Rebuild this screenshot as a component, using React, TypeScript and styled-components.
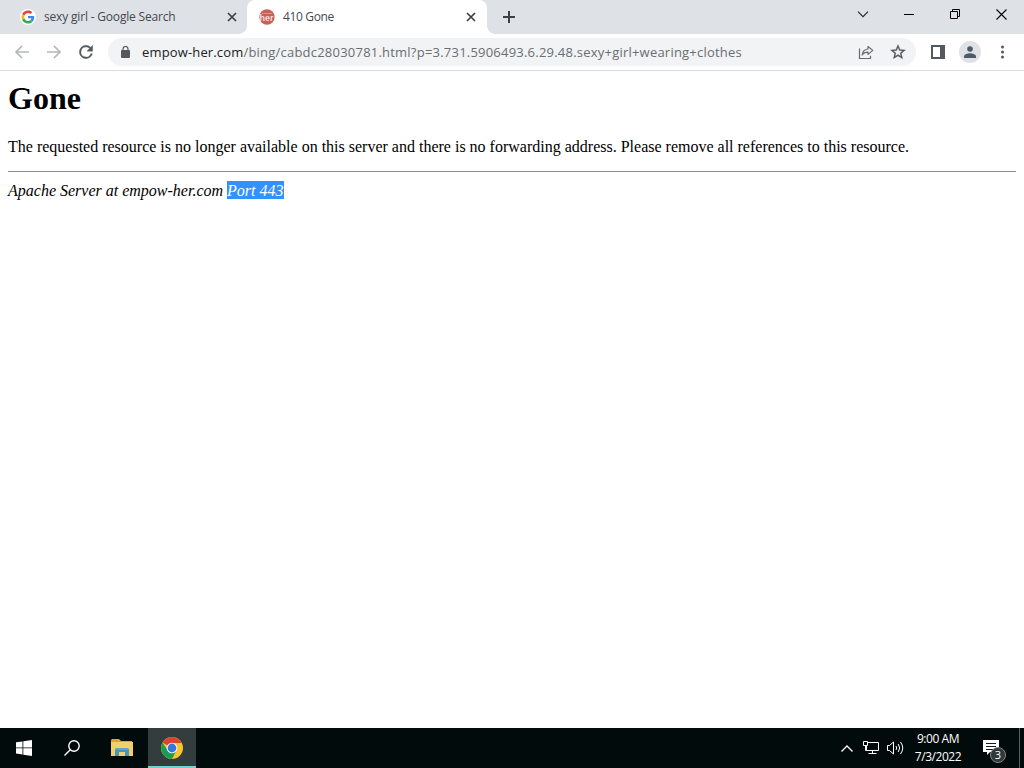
import React from "react";
import styled, { createGlobalStyle } from "styled-components";

const GlobalStyle = createGlobalStyle`
  * {
    box-sizing: border-box;
  }

  body {
    margin: 0;
    overflow: hidden;
    background: #fff;
  }

  svg {
    display: block;
    flex: none;
  }
`;

const Screen = styled.div`
  width: 1024px;
  height: 768px;
  display: flex;
  flex-direction: column;
  background: #fff;
  font-family: "Open Sans", "Noto Sans", sans-serif;
`;

const TabStrip = styled.div`
  height: 34px;
  flex: none;
  display: flex;
  padding-left: 7px;
  background: #dee1e6;
`;

const TabContainer = styled.div<{ $active?: boolean }>`
  position: relative;
  width: 240px;
  height: 34px;
  display: flex;
  align-items: center;
  padding: 0 ${({ $active }) => ($active ? "11px" : "10px")} 0 12px;
  border-radius: 8px 8px 0 0;
  background: ${({ $active }) => ($active ? "#fff" : "transparent")};

  &::before,
  &::after {
    content: "";
    display: ${({ $active }) => ($active ? "block" : "none")};
    position: absolute;
    bottom: 0;
    width: 8px;
    height: 8px;
  }

  &::before {
    left: -8px;
    background: radial-gradient(circle at 0 0, transparent 7.5px, #fff 8px);
  }

  &::after {
    right: -8px;
    background: radial-gradient(circle at 100% 0, transparent 7.5px, #fff 8px);
  }
`;

const TabTitle = styled.span<{ $spacing: string }>`
  flex: 1;
  margin-left: 8px;
  font-size: 12px;
  line-height: 16px;
  letter-spacing: ${({ $spacing }) => $spacing};
  white-space: nowrap;
  color: #45494d;
`;

const NewTab = styled.div`
  width: 28px;
  height: 34px;
  margin-left: 8px;
  display: grid;
  place-items: center;
`;

const WindowControls = styled.div`
  margin-left: auto;
  height: 28px;
  display: flex;
`;

const WindowButton = styled.div`
  width: 46px;
  display: grid;
  place-items: center;
`;

const Toolbar = styled.div`
  height: 37px;
  flex: none;
  display: flex;
  align-items: center;
  padding: 0 5px 0 6px;
  background: #fff;
  border-bottom: 1px solid #dadce0;
`;

const ToolButton = styled.div`
  width: 32px;
  height: 28px;
  flex: none;
  display: grid;
  place-items: center;
`;

const AddressBar = styled.div`
  width: 808px;
  height: 28px;
  margin: 0 6px 0 6px;
  display: flex;
  align-items: center;
  padding: 0 2px 0 13px;
  border-radius: 14px;
  background: #f1f3f4;
`;

const Url = styled.span`
  flex: 1;
  margin-left: 12px;
  font-size: 13px;
  line-height: 20px;
  letter-spacing: 0.22px;
  white-space: nowrap;
  color: #6a6e73;
`;

const Host = styled.span`
  letter-spacing: 0.15px;
  color: #202124;
`;

const Avatar = styled.div`
  width: 22px;
  height: 22px;
  display: grid;
  place-items: center;
  border-radius: 50%;
  background: #dee1e6;
`;

const Page = styled.main`
  flex: 1;
  padding: 9px 8px 8px;
  font-family: "Liberation Serif", "Times New Roman", serif;
  font-size: 16px;
  color: #000;
`;

const Heading = styled.h1`
  margin: 0 0 21px;
  font-size: 32px;
  line-height: 37px;
`;

const Message = styled.p`
  margin: 0;
  line-height: 18px;
  white-space: nowrap;
`;

const Rule = styled.hr`
  height: 1px;
  margin: 15px 0 10px;
  border: 0;
  background: #8c8c8c;
`;

const Address = styled.address`
  line-height: 18px;
`;

const Selected = styled.span`
  padding-top: 1px;
  background: #3390ff;
  color: #fff;
`;

const Taskbar = styled.footer`
  height: 40px;
  flex: none;
  display: flex;
  background: #020b0c;
  color: #fff;
`;

const TaskButton = styled.div<{ $width: number; $active?: boolean }>`
  width: ${({ $width }) => $width}px;
  display: grid;
  place-items: center;
  background: ${({ $active }) => ($active ? "#333d3e" : "transparent")};
  box-shadow: ${({ $active }) => ($active ? "inset 0 -2px #76cfd6" : "none")};
`;

const Tray = styled.div`
  margin-left: auto;
  display: flex;
  align-items: center;
`;

const TrayItem = styled.div`
  width: 24px;
  display: grid;
  place-items: center;
`;

const Clock = styled.div`
  width: 62px;
  font-size: 12px;
  line-height: 18px;
  letter-spacing: -0.45px;
  text-align: center;
  white-space: nowrap;
`;

const Notifications = styled.div`
  position: relative;
  width: 50px;
  height: 40px;
  padding: 12px 0 0 14px;
`;

const Badge = styled.span`
  position: absolute;
  left: 21px;
  top: 19px;
  width: 16px;
  height: 16px;
  border: 1px solid #81898b;
  border-radius: 50%;
  background: #30383a;
  font-size: 11px;
  line-height: 14px;
  text-align: center;
`;

const ShowDesktop = styled.div`
  width: 5px;
  height: 40px;
  border-left: 1px solid #566062;
`;

const CloseIcon = () => (
  <svg width="10" height="10" viewBox="0 0 10 10" stroke="#3c4043" strokeWidth="1.7">
    <path d="M1 1l8 8M9 1l-8 8" />
  </svg>
);

const GoogleIcon = () => (
  <svg width="17" height="16" viewBox="-3 0 51 48">
    <circle cx="24" cy="24" r="24" fill="#fff" />
    <g transform="translate(4.5 4.5) scale(.81)">
      <path fill="#ea4335" d="M24 9.5c3.5 0 6.7 1.2 9.2 3.6l6.9-6.9C35.9 2.4 30.5 0 24 0 14.6 0 6.5 5.4 2.6 13.2l8 6.2C12.4 13.7 17.7 9.5 24 9.5z" />
      <path fill="#4285f4" d="M47 24.6c0-1.6-.2-3.1-.4-4.6H24v9h12.9c-.6 3-2.2 5.5-4.7 7.2l7.7 6C44.4 38 47 31.8 47 24.6z" />
      <path fill="#fbbc05" d="M10.5 28.6a14.5 14.5 0 0 1 0-9.2l-8-6.2a24 24 0 0 0 0 21.6z" />
      <path fill="#34a853" d="M24 48c6.5 0 11.9-2.1 15.9-5.8l-7.7-6c-2.2 1.5-4.9 2.3-8.2 2.3-6.3 0-11.6-4.2-13.5-9.9l-8 6.2C6.5 42.6 14.6 48 24 48z" />
    </g>
  </svg>
);

const SiteIcon = () => (
  <svg width="16" height="16" viewBox="0 0 16 16">
    <circle cx="8" cy="8" r="7.7" fill="#c9605a" />
    <path d="M3 4.5h10" stroke="#dc9189" />
    <text x="7.5" y="12" textAnchor="middle" textLength="14" lengthAdjust="spacingAndGlyphs" fill="#f7ddd9" fontFamily="Liberation Sans, sans-serif" fontSize="9" fontWeight="700">her</text>
  </svg>
);

const PlusIcon = () => (
  <svg width="12" height="12" viewBox="0 0 12 12" stroke="#3c4043" strokeWidth="2">
    <path d="M6 0v12M0 6h12" />
  </svg>
);

const ArrowIcon = ({ forward }: { forward?: boolean }) => (
  <svg width="16" height="14" viewBox="0 0 16 14" fill="none" stroke="#b5b7b9" strokeWidth="1.7">
    <path d={forward ? "M1 7h13M8 1l6 6-6 6" : "M15 7H2M8 1L2 7l6 6"} />
  </svg>
);

const ReloadIcon = () => (
  <svg width="20" height="20" viewBox="0 0 24 24" fill="#55585c" stroke="#55585c" strokeWidth=".4">
    <path d="M17.65 6.35A7.96 7.96 0 0 0 12 4a8 8 0 1 0 7.73 10h-2.08A6 6 0 1 1 12 6c1.66 0 3.14.69 4.22 1.78L13 11h7V4z" />
  </svg>
);

const LockIcon = () => (
  <svg width="9" height="13" viewBox="0 0 9 13" fill="#55585c">
    <rect y="4" width="9" height="8" rx="1" />
    <path d="M2 5V3a2.5 2.5 0 0 1 5 0v2" fill="none" stroke="#55585c" strokeWidth="1.2" />
  </svg>
);

const ShareIcon = () => (
  <svg width="16" height="16" viewBox="0 0 16 16" fill="none" stroke="#66696d" strokeWidth="1.2">
    <path d="M1.5 4.5v10h11v-2.7" />
    <path d="M10 2.5l4.8 3.9-4.8 4V8.1c-2.7 0-4.7.8-5.8 3 .2-3.4 2-5.7 5.8-6.1z" strokeLinejoin="round" />
  </svg>
);

const StarIcon = () => (
  <svg width="18" height="18" viewBox="0 0 24 24" fill="#55585c" stroke="#55585c" strokeWidth=".4">
    <path d="M22 9.24l-7.19-.62L12 2 9.19 8.63 2 9.24l5.46 4.73L5.82 21 12 17.27 18.18 21l-1.63-7.03L22 9.24zM12 15.4l-3.76 2.27 1-4.28-3.32-2.88 4.38-.38L12 6.1l1.71 4.04 4.38.38-3.32 2.88 1 4.28L12 15.4z" />
  </svg>
);

const SidePanelIcon = () => (
  <svg width="14" height="14" viewBox="0 0 14 14">
    <path d="M1 1h12v12H1z" fill="#fff" stroke="#55585c" strokeWidth="2" />
    <path d="M9 0h5v14H9z" fill="#55585c" />
  </svg>
);

const PersonIcon = () => (
  <svg width="12" height="12" viewBox="0 0 12 12" fill="#4d5b69">
    <circle cx="6" cy="3" r="2.8" />
    <path d="M0 12v-1.7C0 8.3 3.9 7.2 6 7.2s6 1.1 6 3.1V12z" />
  </svg>
);

const MenuIcon = () => (
  <svg width="4" height="14" viewBox="0 0 4 14" fill="#55585c">
    <circle cx="2.5" cy="2" r="1.5" />
    <circle cx="2.5" cy="7" r="1.5" />
    <circle cx="2.5" cy="12" r="1.5" />
  </svg>
);

const FolderIcon = () => (
  <svg width="22" height="18" viewBox="0 0 22 18">
    <path d="M1 0h7l2 2h11v3H0V1z" fill="#dfa636" />
    <path d="M0 3h22v14H0z" fill="#f3cf6b" />
    <path d="M4 17v-6l1-2h12l1 2v6h-4v-4H8v4z" fill="#4a93bd" />
    <path d="M5 9h12l1 2H4z" fill="#60a5c9" />
  </svg>
);

const ChromeIcon = () => (
  <svg width="22" height="22" viewBox="0 0 22 22">
    <circle cx="11" cy="11" r="11" fill="#f9c52a" />
    <path d="M11 11L1.5 5.5A11 11 0 0 1 20.5 5.5L20.8 6H11z" fill="#dd4437" />
    <path d="M1.5 5.5A11 11 0 0 0 11 22l4.4-8.5L11 11 6.7 13.5z" fill="#1d9b55" />
    <circle cx="11" cy="11" r="5.3" fill="#fff" />
    <circle cx="11" cy="11" r="4.4" fill="#3478dd" />
  </svg>
);

const App: React.FC = () => (
  <>
    <GlobalStyle />
    <Screen>
      <TabStrip>
        <TabContainer>
          <GoogleIcon />
          <TabTitle $spacing="-0.18px">sexy girl - Google Search</TabTitle>
          <CloseIcon />
        </TabContainer>
        <TabContainer $active>
          <SiteIcon />
          <TabTitle $spacing="-0.35px">410 Gone</TabTitle>
          <CloseIcon />
        </TabContainer>
        <NewTab>
          <PlusIcon />
        </NewTab>
        <WindowControls>
          <WindowButton>
            <svg width="12" height="7" viewBox="0 0 12 7" fill="none" stroke="#202124" strokeWidth="1.1">
              <path d="M1 .7l5 5 5-5" />
            </svg>
          </WindowButton>
          <WindowButton>
            <svg width="10" height="1" viewBox="0 0 10 1">
              <path d="M0 0h10v1H0z" />
            </svg>
          </WindowButton>
          <WindowButton>
            <svg width="10" height="10" viewBox="0 0 10 10" fill="none" stroke="#000">
              <path d="M.5 2.5h7v7h-7zM2.5 2.5v-2h7v7h-2" />
            </svg>
          </WindowButton>
          <WindowButton>
            <svg width="11" height="11" viewBox="0 0 11 11" stroke="#000" strokeWidth="1.1">
              <path d="M.5.5l10 10M10.5.5l-10 10" />
            </svg>
          </WindowButton>
        </WindowControls>
      </TabStrip>
      <Toolbar>
        <ToolButton><ArrowIcon /></ToolButton>
        <ToolButton><ArrowIcon forward /></ToolButton>
        <ToolButton><ReloadIcon /></ToolButton>
        <AddressBar>
          <LockIcon />
          <Url>
            <Host>empow-her.com</Host>
            /bing/cabdc28030781.html?p=3.731.5906493.6.29.48.sexy+girl+wearing+clothes
          </Url>
          <ToolButton><ShareIcon /></ToolButton>
          <ToolButton><StarIcon /></ToolButton>
        </AddressBar>
        <ToolButton><SidePanelIcon /></ToolButton>
        <ToolButton>
          <Avatar><PersonIcon /></Avatar>
        </ToolButton>
        <ToolButton><MenuIcon /></ToolButton>
      </Toolbar>
      <Page>
        <Heading>Gone</Heading>
        <Message>
          The requested resource is no longer available on this server and there is no forwarding address. Please remove all references to this resource.
        </Message>
        <Rule />
        <Address>
          Apache Server at empow-her.com <Selected>Port 443</Selected>
        </Address>
      </Page>
      <Taskbar>
        <TaskButton $width={48}>
          <svg width="16" height="16" viewBox="0 0 16 16" fill="#fff">
            <path d="M0 2.3l6.5-.9v6.1H0zM7.3 1.3L16 0v7.5H7.3zM0 8.3h6.5v6.2L0 13.6zM7.3 8.3H16V16l-8.7-1.3z" />
          </svg>
        </TaskButton>
        <TaskButton $width={48}>
          <svg width="16" height="16" viewBox="0 0 16 16" fill="none" stroke="#fff" strokeWidth="1.4">
            <circle cx="10" cy="6" r="5.2" />
            <path d="M6.3 9.7L.5 15.5" />
          </svg>
        </TaskButton>
        <TaskButton $width={52}><FolderIcon /></TaskButton>
        <TaskButton $width={48} $active><ChromeIcon /></TaskButton>
        <Tray>
          <TrayItem>
            <svg width="12" height="7" viewBox="0 0 12 7" fill="none" stroke="#fff" strokeWidth="1.3">
              <path d="M.5 6.5L6 1l5.5 5.5" />
            </svg>
          </TrayItem>
          <TrayItem>
            <svg width="16" height="14" viewBox="0 0 16 14" fill="none" stroke="#fff">
              <path d="M5 1.5h10.5v8h-12V5M9.5 9.5v3M5.5 12.5h8M.5.5h4v4h-4zM2.5 4.5v5h1" />
            </svg>
          </TrayItem>
          <TrayItem>
            <svg width="17" height="14" viewBox="0 0 17 14" fill="none" stroke="#fff">
              <path d="M.5 4.5h2L6.5 1v12l-4-3.5h-2zM9 5q1.5 2 0 4M11.2 3q3 4 0 8M13.5 1q4.5 6 0 12" />
            </svg>
          </TrayItem>
          <Clock>
            <div>9:00 AM</div>
            <div>7/3/2022</div>
          </Clock>
          <Notifications>
            <svg width="16" height="16" viewBox="0 0 16 16">
              <path d="M0 0h16v12H7l-3 3v-3H0z" fill="#fff" />
              <path d="M3 3.5h10M3 6.5h10M3 9.5h7" stroke="#111a1c" />
            </svg>
            <Badge>3</Badge>
          </Notifications>
          <ShowDesktop />
        </Tray>
      </Taskbar>
    </Screen>
  </>
);

export default App;
